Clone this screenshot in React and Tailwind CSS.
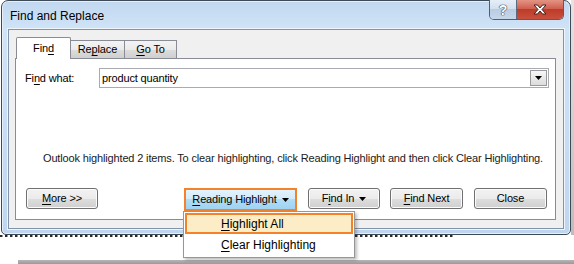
import React from 'react';

const U = ({ children }) => <span className="underline underline-offset-[2px]">{children}</span>;

const Caret = () => (
  <svg width="7" height="4" viewBox="0 0 7 4" className="ml-[5px]">
    <path d="M0 0h7L3.5 4z" fill="#000" />
  </svg>
);

function Btn({ className = '', children }) {
  return (
    <div
      className={`flex h-[21px] items-center justify-center rounded-[3px] border border-[#707070] bg-[linear-gradient(#f2f2f2_0%,#ebebeb_50%,#dddddd_51%,#cfcfcf_100%)] shadow-[inset_0_0_0_1px_#fbfbfb] ${className}`}
    >
      {children}
    </div>
  );
}

function CaptionButtons() {
  return (
    <div className="-mt-[1px] flex h-[20px] overflow-hidden rounded-b-[5px] border border-t-0 border-[#4f5f73]">
      <div className="flex w-[27px] items-center justify-center border-r border-[#5a6b80] bg-[linear-gradient(#e6eef8_0%,#d3e0ef_45%,#b9cce3_50%,#c6d7ea_100%)]">
        <span className="text-[14px] font-bold leading-none text-white [text-shadow:0_0_1px_#2d3a4a,0_0_1px_#2d3a4a,0_0_1px_#2d3a4a]">
          ?
        </span>
      </div>
      <div className="flex w-[46px] items-center justify-center bg-[linear-gradient(#e39484_0%,#d0604f_45%,#bd3b29_50%,#c9503d_100%)]">
        <svg width="14" height="11" viewBox="0 0 14 11">
          <path
            d="M1 1h3.5L7 4l2.5-3H13L9 5.5l4 4.5H9.5L7 7l-2.5 3H1l4-4.5z"
            fill="#fff"
            stroke="#3b2320"
            strokeWidth="1"
            strokeLinejoin="round"
          />
        </svg>
      </div>
    </div>
  );
}

export default function App() {
  return (
    <div className="relative h-[264px] w-[574px] overflow-hidden bg-white font-['Liberation_Sans',Arial,sans-serif] text-[11px] tracking-[-0.15px] text-black">
      <div className="flex">
        {/* window */}
        <div className="ml-[1px] flex h-[235px] w-[570px] flex-col rounded-t-[7px] rounded-b-[5px] border border-[#3f4a57] bg-[linear-gradient(#c2d8f0_0%,#d0e3f7_12%,#c0d6ef_100%)] shadow-[inset_0_0_0_1px_#e6f0fb]">
          <div className="flex h-[28px] items-start">
            <div className="flex-1 pl-[8px] pt-[6px] text-[12px] tracking-normal">Find and Replace</div>
            <div className="mr-[6px]">
              <CaptionButtons />
            </div>
          </div>

          {/* client area */}
          <div className="ml-[6px] flex h-[200px] w-[556px] flex-col border border-[#8294ab] bg-[#f0f0f0] shadow-[0_0_0_1px_#eef5fc]">
            <div className="relative z-10 ml-[6px] mt-[7px] flex h-[21px] items-end">
              <div className="-mb-[1px] ml-[1px] flex h-[22px] w-[55px] items-center justify-center rounded-t-[2px] border border-b-0 border-[#898c95] bg-white">
                Fin<U>d</U>
              </div>
              <div className="flex h-[18px] w-[54px] items-center justify-center border-t border-r border-[#898c95] bg-[linear-gradient(#f3f3f3_0%,#ebebeb_50%,#dddddd_51%,#cfcfcf_100%)]">
                Re<U>p</U>lace
              </div>
              <div className="flex h-[18px] w-[52px] items-center justify-center border-t border-r border-[#898c95] bg-[linear-gradient(#f3f3f3_0%,#ebebeb_50%,#dddddd_51%,#cfcfcf_100%)]">
                <U>G</U>o To
              </div>
            </div>

            {/* tab panel */}
            <div className="ml-[6px] flex h-[162px] w-[541px] flex-col border border-[#898c95] bg-white">
              <div className="mt-[9px] flex h-[20px] items-center">
                <div className="w-[83px] pl-[9px]">
                  Fi<U>n</U>d what:
                </div>
                <div className="flex h-[20px] w-[450px] items-center justify-between border border-[#a9abb2] pl-[2px] pr-[1px]">
                  <span>product quantity</span>
                  <div className="flex h-[16px] w-[17px] items-center justify-center border border-[#9a9a9a] bg-[linear-gradient(#f7f7f7,#dcdcdc)]">
                    <svg width="7" height="4" viewBox="0 0 7 4">
                      <path d="M0 0h7L3.5 4z" fill="#000" />
                    </svg>
                  </div>
                </div>
              </div>

              <div className="mt-[63px] pl-[27px] leading-[14px] text-[#1a1a1a]">
                Outlook highlighted 2 items. To clear highlighting, click Reading Highlight and then click Clear Highlighting.
              </div>

              <div className="mt-[23px] flex items-start pl-[10px]">
                <Btn className="w-[72px]">
                  <U>M</U>ore &gt;&gt;
                </Btn>
                <div className="ml-[86px] flex h-[23px] w-[113px] border-2 border-[#f4822a]">
                  <div className="flex flex-1 items-center justify-center bg-[linear-gradient(#e3f3fc_0%,#d2ecfb_45%,#b0ddf7_50%,#9fd3f2_100%)]">
                    <U>R</U>eading Highlight
                    <Caret />
                  </div>
                </div>
                <Btn className="ml-[11px] w-[72px]">
                  F<U>i</U>nd In
                  <Caret />
                </Btn>
                <Btn className="ml-[10px] w-[73px]">
                  <U>F</U>ind Next
                </Btn>
                <Btn className="ml-[11px] w-[73px]">Close</Btn>
              </div>
            </div>
          </div>
        </div>
        <div className="h-[235px] w-[3px] bg-[linear-gradient(#e4e4e4,#bdbdbd)]" />
      </div>

      {/* edge of the document line hidden behind the window */}
      <div className="h-[2px] w-[455px] bg-[repeating-linear-gradient(90deg,#2a2a2a_0_2px,#9a9a9a_2px_3px,transparent_3px_5px)]" />

      <div className="ml-[18px] mt-[23px] h-[4px] bg-[linear-gradient(#b5b5b5,#9a9a9a)]" />

      {/* dropdown menu */}
      <div className="absolute left-[183px] top-[211px] flex h-[47px] w-[172px] flex-col border border-[#979797] bg-white p-[1px] shadow-[2px_2px_3px_rgba(0,0,0,0.25)]">
        <div className="flex h-[21px] items-center border-2 border-[#f4822a] bg-[#fdedc7] pl-[34px] text-[12px] tracking-normal">
          <U>H</U>ighlight All
        </div>
        <div className="flex h-[22px] items-center pl-[36px] text-[12px] tracking-normal">
          <U>C</U>lear Highlighting
        </div>
      </div>
    </div>
  );
}
